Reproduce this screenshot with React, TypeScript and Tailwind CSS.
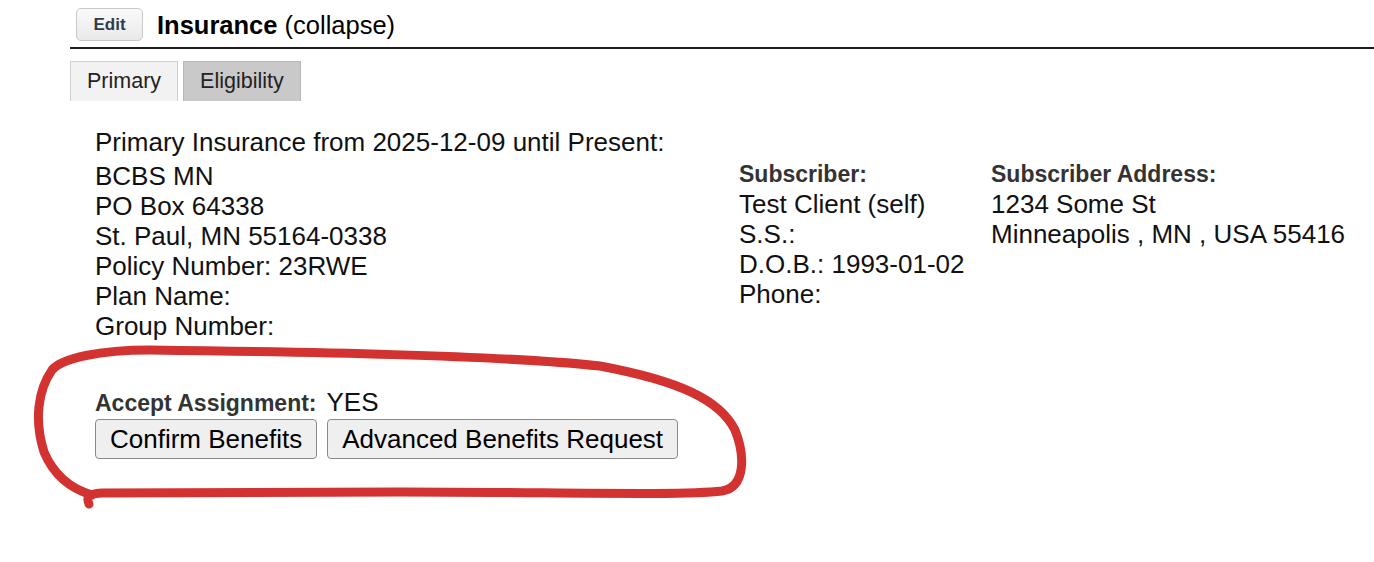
import React from 'react';

const font = { fontFamily: '"Liberation Sans", Arial, Helvetica, sans-serif' };

const leftLines = [
  'BCBS MN',
  'PO Box 64338',
  'St. Paul, MN 55164-0338',
  'Policy Number: 23RWE',
  'Plan Name:',
  'Group Number:',
];

const subscriberLines = ['Test Client (self)', 'S.S.:', 'D.O.B.: 1993-01-02', 'Phone:'];

const addressLines = ['1234 Some St', 'Minneapolis , MN , USA 55416'];

// красная обводка поверх контента (пометка от руки)
const Annotation = () => (
  <svg
    className="absolute inset-0 pointer-events-none"
    width="1374"
    height="562"
    viewBox="0 0 1374 562"
    fill="none"
  >
    <path
      d="M 89 504 C 86 497, 88 494, 102 493 L 400 492 C 550 492, 680 496, 722 491 C 746 487, 745 455, 735 430 C 720 400, 680 381, 600 366 C 500 355, 300 352, 150 350 C 100 350, 62 358, 52 370 C 38 390, 34 420, 44 452 C 55 478, 75 490, 92 495"
      stroke="#d23330"
      strokeWidth="9"
      strokeLinecap="round"
      strokeLinejoin="round"
    />
  </svg>
);

export default function App() {
  return (
    <div className="relative w-full h-[562px] bg-white overflow-hidden text-[#111]" style={font}>
      <div className="pl-[70px] pt-2">
        {/* ===== заголовок ===== */}
        <div className="flex items-center h-[33px]">
          <button className="ml-[6px] h-[33px] w-[67px] rounded-[5px] border border-[#c8c8c8] bg-gradient-to-b from-[#fafafa] to-[#e9e9e9] text-[17px] font-bold text-[#2e3d4d]">
            Edit
          </button>
          <div className="ml-[14px] text-[25.5px] leading-[30px] text-black">
            <span className="font-bold">Insurance</span> (collapse)
          </div>
        </div>
        <div className="mt-[6px] h-[2px] bg-[#1e1e1e]" />

        {/* ===== вкладки ===== */}
        <div className="mt-[12px] flex gap-[5px] h-[40px]">
          <div className="px-[16px] flex items-center border border-b-0 border-[#cfcfcf] bg-[#f2f2f2] text-[21.5px] text-[#222]">
            Primary
          </div>
          <div className="px-[16px] flex items-center border border-b-0 border-[#b8b8b8] bg-[#c9c9c9] text-[21.5px] text-[#222]">
            Eligibility
          </div>
        </div>

        {/* ===== содержимое ===== */}
        <div className="pl-[25px] pt-[26px] text-[26px] leading-[30px]">
          <div className="mb-[4px]">Primary Insurance from 2025-12-09 until Present:</div>
          <div className="grid grid-cols-[644px_252px_auto]">
            <div>
              {leftLines.map((l) => (
                <div key={l}>{l}</div>
              ))}
            </div>
            <div className="-mt-[2px]">
              <div className="text-[23px] font-bold text-[#333]">Subscriber:</div>
              {subscriberLines.map((l) => (
                <div key={l}>{l}</div>
              ))}
            </div>
            <div className="-mt-[2px]">
              <div className="text-[23px] font-bold text-[#333]">Subscriber Address:</div>
              {addressLines.map((l) => (
                <div key={l}>{l}</div>
              ))}
            </div>
          </div>

          <div className="mt-[46px] flex items-baseline">
            <span className="text-[23px] font-bold text-[#333]">Accept Assignment:</span>
            <span className="ml-[10px]">YES</span>
          </div>
          <div className="mt-[1px] flex gap-[10px]">
            <button className="h-[40px] px-[14px] rounded-[4px] border-[1.5px] border-[#8a8a8a] bg-[#efefef] text-[26px] text-black">
              Confirm Benefits
            </button>
            <button className="h-[40px] px-[14px] rounded-[4px] border-[1.5px] border-[#8a8a8a] bg-[#efefef] text-[26px] text-black">
              Advanced Benefits Request
            </button>
          </div>
        </div>
      </div>
      <Annotation />
    </div>
  );
}
